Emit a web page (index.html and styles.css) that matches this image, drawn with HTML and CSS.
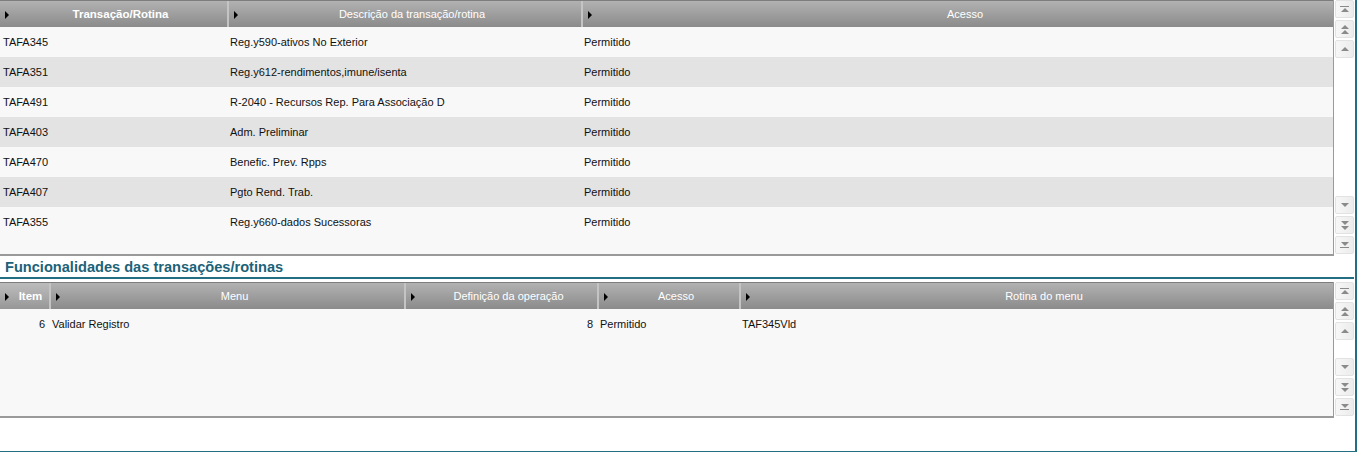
FILE: index.html
```html
<!DOCTYPE html>
<html>
<head>
    <meta charset="utf-8">
    <title>Transações/rotinas</title>
    <link rel="stylesheet" href="styles.css">
</head>
<body>
<div class="panel">
    <div class="grid-wrap top-grid">
        <div class="grid cols-top">
            <div class="head"><div class="hcell bold"><span class="arrow"></span>Transação/Rotina</div><div class="hcell"><span class="arrow"></span>Descrição da transação/rotina</div><div class="hcell"><span class="arrow"></span>Acesso</div></div>
            <div class="row"><div>TAFA345</div><div>Reg.y590-ativos No Exterior</div><div>Permitido</div></div>
            <div class="row alt"><div>TAFA351</div><div>Reg.y612-rendimentos,imune/isenta</div><div>Permitido</div></div>
            <div class="row"><div>TAFA491</div><div>R-2040 - Recursos Rep. Para Associação D</div><div>Permitido</div></div>
            <div class="row alt"><div>TAFA403</div><div>Adm. Preliminar</div><div>Permitido</div></div>
            <div class="row"><div>TAFA470</div><div>Benefic. Prev. Rpps</div><div>Permitido</div></div>
            <div class="row alt"><div>TAFA407</div><div>Pgto Rend. Trab.</div><div>Permitido</div></div>
            <div class="row"><div>TAFA355</div><div>Reg.y660-dados Sucessoras</div><div>Permitido</div></div>
        </div>
        <div class="scroll">
            <div class="sbtn first"><span class="bar"></span><span class="up"></span></div>
            <div class="sbtn"><span class="up"></span><span class="up"></span></div>
            <div class="sbtn"><span class="up"></span></div>
            <div class="track"></div>
            <div class="sbtn"><span class="down"></span></div>
            <div class="sbtn"><span class="down"></span><span class="down"></span></div>
            <div class="sbtn"><span class="down"></span><span class="bar"></span></div>
        </div>
    </div>

    <h2 class="section-title">Funcionalidades das transações/rotinas</h2>

    <div class="grid-wrap bottom-grid">
        <div class="grid cols-bottom">
            <div class="head"><div class="hcell bold sel left"><span class="arrow"></span>Item</div><div class="hcell"><span class="arrow"></span>Menu</div><div class="hcell"><span class="arrow"></span>Definição da operação</div><div class="hcell"><span class="arrow"></span>Acesso</div><div class="hcell"><span class="arrow"></span>Rotina do menu</div></div>
            <div class="row"><div class="num">6</div><div>Validar Registro</div><div class="num">8</div><div>Permitido</div><div>TAF345Vld</div></div>
        </div>
        <div class="scroll">
            <div class="sbtn first"><span class="bar"></span><span class="up"></span></div>
            <div class="sbtn"><span class="up"></span><span class="up"></span></div>
            <div class="sbtn"><span class="up"></span></div>
            <div class="track"></div>
            <div class="sbtn"><span class="down"></span></div>
            <div class="sbtn"><span class="down"></span><span class="down"></span></div>
            <div class="sbtn"><span class="down"></span><span class="bar"></span></div>
        </div>
    </div>
</div>
</body>
</html>
```
FILE: styles.css
```css
body {
    margin: 0;
    font-family: "Liberation Sans", Arial, sans-serif;
    font-size: 11px;
    color: #111;
    background: #fff;
}
.panel {
    width: 1357px;
    height: 452px;
    box-sizing: border-box;
    border-right: 2px solid #236e82;
    border-bottom: 1px solid #236e82;
    display: flex;
    flex-direction: column;
}
.grid-wrap {
    display: flex;
}
.top-grid {
    height: 256px;
}
.bottom-grid {
    height: 136px;
}
.grid {
    width: 1334px;
    box-sizing: border-box;
    background: #f8f8f8;
    border-right: 1px solid #9a9a9a;
    border-bottom: 2px solid #9a9a9a;
}
.head, .row {
    display: grid;
}
.cols-top .head, .cols-top .row {
    grid-template-columns: 227px 354px 1fr;
}
.cols-bottom .head, .cols-bottom .row {
    grid-template-columns: 49px 355px 193px 142px 1fr;
}
.head {
    height: 27px;
    box-sizing: border-box;
    border-top: 1px solid #7d7d7d;
    background: linear-gradient(#b2b2b2, #8b8b8b);
}
.hcell {
    position: relative;
    display: flex;
    align-items: center;
    justify-content: center;
    padding-left: 14px;
    color: #fff;
    border-left: 2px solid #c4c4c4;
}
.hcell.left {
    border-left: none;
}
.cols-top .hcell:first-child {
    border-left: none;
}
.hcell.bold {
    font-weight: bold;
    font-size: 11.5px;
}
.hcell.sel {
    background: linear-gradient(#bdbdbd, #979797);
    padding-left: 12px;
}
.arrow {
    position: absolute;
    left: 5px;
    top: 10px;
    width: 0;
    height: 0;
    border-top: 4px solid transparent;
    border-bottom: 4px solid transparent;
    border-left: 4px solid #000;
}
.row {
    height: 30px;
    align-items: center;
}
.row div {
    padding-left: 3px;
    white-space: nowrap;
}
.row.alt {
    background: #e3e3e3;
}
.row .num {
    text-align: right;
    padding-right: 4px;
}
.scroll {
    width: 19px;
    margin-left: 1px;
    display: flex;
    flex-direction: column;
}
.sbtn {
    height: 18px;
    margin-bottom: 2px;
    box-sizing: border-box;
    border: 1px solid #e2e2e2;
    border-radius: 2px;
    background: linear-gradient(90deg, #f7f7f7, #ececec);
    display: flex;
    flex-direction: column;
    align-items: center;
    justify-content: center;
    gap: 1px;
}
.track {
    flex: 1;
}
.up, .down {
    width: 0;
    height: 0;
    border-left: 4px solid transparent;
    border-right: 4px solid transparent;
}
.up {
    border-bottom: 4px solid #8a8a8a;
}
.down {
    border-top: 4px solid #8a8a8a;
}
.bar {
    width: 9px;
    height: 1px;
    background: #8a8a8a;
}
.section-title {
    margin: 0 0 3px;
    padding: 3px 5px 2px;
    width: 1354px;
    box-sizing: border-box;
    color: #1c6278;
    font-size: 14.6px;
    font-weight: bold;
    border-bottom: 2px solid #236e82;
}
```
